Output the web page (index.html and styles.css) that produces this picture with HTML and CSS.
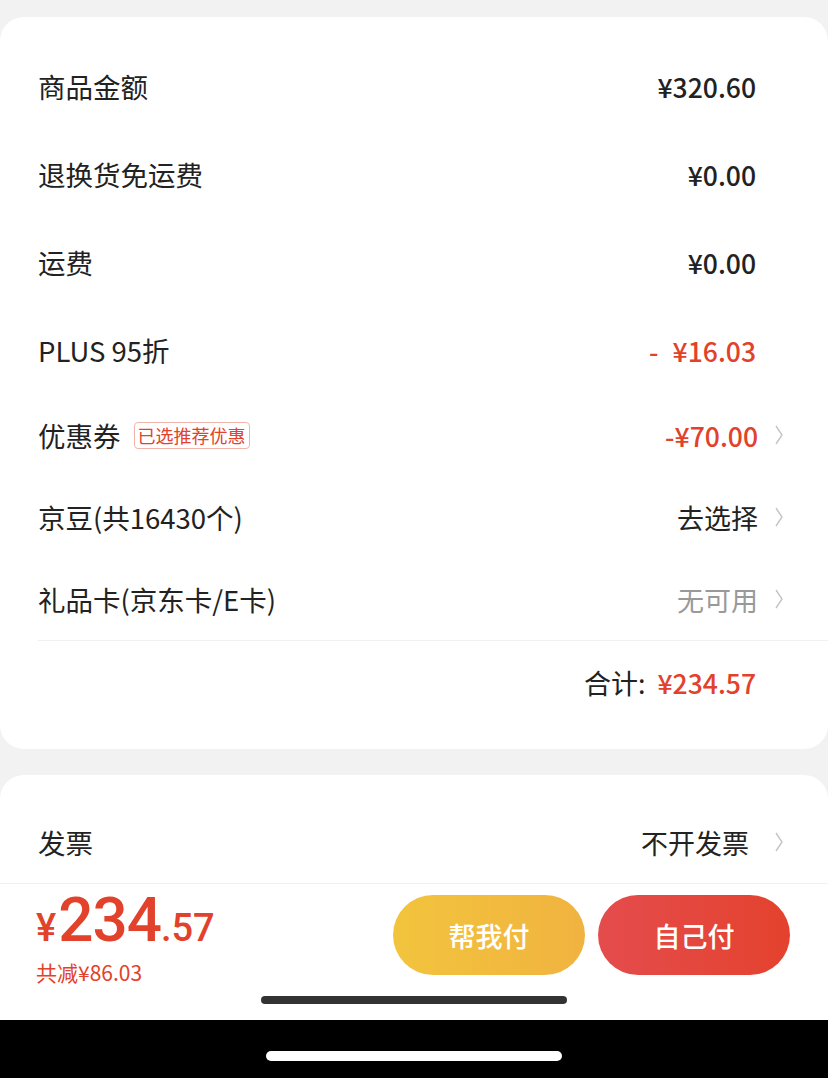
FILE: index.html
```html
<!DOCTYPE html>
<html lang="zh-CN">
<head>
    <meta charset="UTF-8">
    <meta name="viewport" content="width=device-width, initial-scale=1.0">
    <title>结算</title>
    <link rel="stylesheet" href="styles.css">
</head>
<body>
    <div class="page">
        <div class="card">
            <div class="row tall">
                <span class="label">商品金额</span>
                <span class="value">¥320.60</span>
            </div>
            <div class="row tall">
                <span class="label">退换货免运费</span>
                <span class="value">¥0.00</span>
            </div>
            <div class="row tall">
                <span class="label">运费</span>
                <span class="value">¥0.00</span>
            </div>
            <div class="row tall">
                <span class="label">PLUS 95折</span>
                <span class="value red"><span class="minus">-</span>¥16.03</span>
            </div>
            <div class="row">
                <span class="label">优惠券 <span class="tag">已选推荐优惠</span></span>
                <span class="value red">-¥70.00<svg class="arrow" viewBox="0 0 10 22"><polyline points="2,2 8,11 2,20"/></svg></span>
            </div>
            <div class="row">
                <span class="label">京豆(共16430个)</span>
                <span class="value normal">去选择<svg class="arrow" viewBox="0 0 10 22"><polyline points="2,2 8,11 2,20"/></svg></span>
            </div>
            <div class="row">
                <span class="label">礼品卡(京东卡/E卡)</span>
                <span class="value gray">无可用<svg class="arrow" viewBox="0 0 10 22"><polyline points="2,2 8,11 2,20"/></svg></span>
            </div>
            <div class="total">
                合计:<span class="red">¥234.57</span>
            </div>
        </div>

        <div class="card second">
            <div class="row tall invoice">
                <span class="label">发票</span>
                <span class="value normal">不开发票<svg class="arrow wide" viewBox="0 0 10 22"><polyline points="2,2 8,11 2,20"/></svg></span>
            </div>
        </div>
    </div>

    <div class="bottom-bar">
        <div class="pay">
            <div class="price">
                <div class="amount"><span class="yen">¥</span><span class="int">234</span><span class="dec">.57</span></div>
                <div class="saved">共减¥86.03</div>
            </div>
            <div class="buttons">
                <button class="btn help">帮我付</button>
                <button class="btn self">自己付</button>
            </div>
        </div>
        <div class="indicator-wrap"><div class="indicator"></div></div>
        <div class="nav-strip"><div class="pill"></div></div>
    </div>
</body>
</html>
```

FILE: styles.css
```css
body {
    margin: 0;
    background: #f2f2f2;
    font-family: "Noto Sans CJK SC", "Noto Sans", sans-serif;
    color: #222;
}

.page {
    padding-top: 17px;
}

.card {
    background: #fff;
    border-radius: 24px;
    padding: 25px 0 26px 38px;
}

.card.second {
    margin-top: 26px;
    padding-top: 23px;
    height: 300px;
}

.row {
    display: flex;
    justify-content: space-between;
    align-items: center;
    height: 82px;
    padding-right: 44px;
}

.row.tall {
    height: 88px;
    padding-right: 72px;
}

.row.invoice {
    padding-right: 44px;
}

.label {
    font-size: 27.5px;
    display: flex;
    align-items: center;
}

.tag {
    font-size: 18px;
    color: #e2412b;
    border: 1px solid #f0b4aa;
    border-radius: 4px;
    padding: 0 3px;
    margin-left: 13px;
    line-height: 25px;
}

.value {
    font-size: 26.5px;
    font-weight: 500;
    display: flex;
    align-items: center;
}

.value.normal {
    font-weight: 400;
    font-size: 27px;
}

.value.gray {
    font-weight: 400;
    font-size: 27px;
    color: #999;
}

.minus {
    margin-right: 14px;
}

.red {
    color: #e2412b;
}

.arrow {
    width: 10px;
    height: 22px;
    margin-left: 16px;
    fill: none;
    stroke: #c4c4c4;
    stroke-width: 1.4;
}

.arrow.wide {
    margin-left: 25px;
}

.total {
    border-top: 1px solid #f0f0f0;
    height: 82px;
    display: flex;
    align-items: center;
    justify-content: flex-end;
    padding-right: 72px;
    font-size: 27px;
}

.total .red {
    font-weight: 500;
    font-size: 26.5px;
    margin-left: 12px;
}

.bottom-bar {
    position: fixed;
    left: 0;
    right: 0;
    bottom: 0;
    background: #fff;
    border-top: 1px solid #f0f0f0;
}

.pay {
    display: flex;
    justify-content: space-between;
    align-items: flex-start;
    height: 91px;
    padding: 0 38px 0 36px;
}

.price {
    padding-top: 5px;
}

.amount {
    display: flex;
    align-items: baseline;
    color: #e2412b;
    font-family: Roboto, "Noto Sans CJK SC", sans-serif;
    font-weight: 500;
    line-height: 1;
}

.yen {
    font-size: 38px;
    margin-right: 2px;
}

.int {
    font-size: 62px;
    letter-spacing: -1px;
}

.dec {
    font-size: 38px;
}

.saved {
    color: #e2412b;
    font-size: 21px;
    line-height: 28px;
    margin-top: 7px;
}

.buttons {
    display: flex;
    gap: 13px;
    margin-top: 11px;
}

.btn {
    width: 192px;
    height: 80px;
    border: none;
    border-radius: 40px;
    color: #fff;
    font-family: inherit;
    font-size: 27px;
    font-weight: 500;
}

.btn.help {
    background: linear-gradient(90deg, #f2c43d, #f1b340);
}

.btn.self {
    background: linear-gradient(90deg, #e44c4d, #e4422d);
}

.indicator-wrap {
    display: flex;
    justify-content: center;
    padding: 21px 0 16px;
}

.indicator {
    width: 306px;
    height: 8px;
    border-radius: 4px;
    background: #333;
}

.nav-strip {
    background: #000;
    height: 58px;
    display: flex;
    justify-content: center;
    align-items: center;
}

.pill {
    width: 296px;
    height: 10px;
    border-radius: 5px;
    background: #fff;
    margin-top: 14px;
}
```
